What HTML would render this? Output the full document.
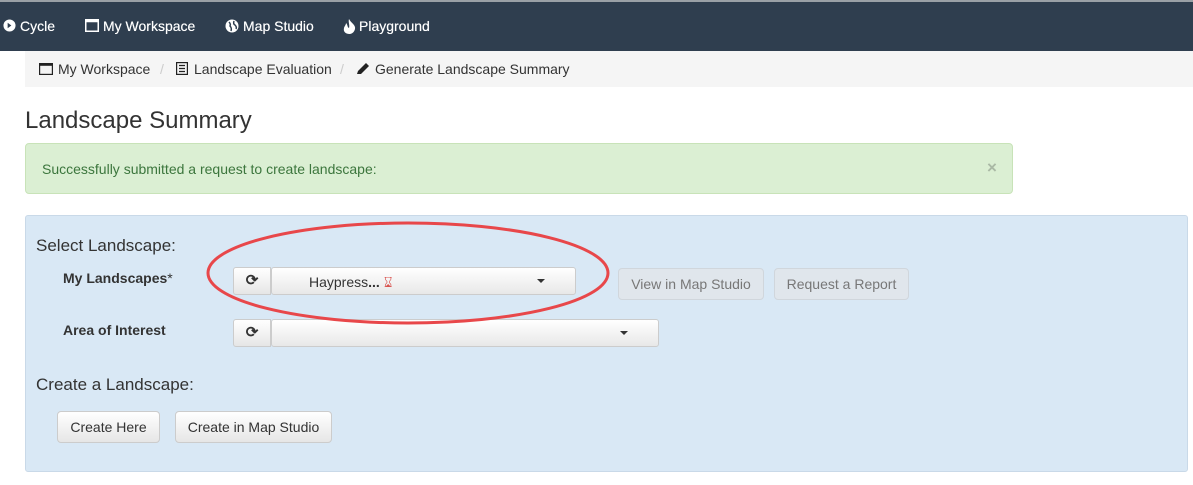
<!DOCTYPE html>
<html><head><style>
body{margin:0;width:1193px;height:485px;background:#fff;font-family:"Liberation Sans",sans-serif;position:relative;overflow:hidden;color:#333}
.top{position:absolute;left:0;top:0;width:1193px;height:51px;background:#2f3e4f;border-top:2px solid #9aa0a6;box-sizing:border-box}
.top span{position:absolute;top:16px;color:#fff;font-size:14px;text-shadow:0 0 0.4px #fff}
.top svg{position:absolute;top:17px}
.bc{position:absolute;left:25px;top:51px;width:1168px;height:36px;background:#f5f5f5;font-size:14px}
.bc span{position:absolute;top:10px}
.sep{color:#ccc}
h1{position:absolute;left:25px;top:107px;margin:0;font-size:24px;font-weight:normal}
.alert{position:absolute;left:25px;top:143px;width:988px;height:51px;background:#dbefd3;border:1px solid #c8e3b8;border-radius:4px;color:#3c763d;font-size:14px;box-sizing:border-box}
.panel{position:absolute;left:25px;top:215px;width:1163px;height:257px;background:#d9e8f5;border:1px solid #c9d9e8;border-radius:3px;box-sizing:border-box}
.lbl{position:absolute;font-size:17px;color:#333}
.b{position:absolute;font-size:14px;font-weight:bold;color:#333}
.sel{position:absolute;height:28px;border:1px solid #ccc;border-radius:3px;background:linear-gradient(#fff,#e8e8e8);box-sizing:border-box}
.rf{position:absolute;width:38px;height:28px;border:1px solid #ccc;border-radius:3px 0 0 3px;background:linear-gradient(#fff,#e6e6e6);box-sizing:border-box;text-align:center;font-size:15px;line-height:26px;color:#333;font-weight:bold}
.car{position:absolute;top:11px;width:0;height:0;border-left:4px solid transparent;border-right:4px solid transparent;border-top:4px solid #333}
.btn{position:absolute;height:32px;border:1px solid #ccc;border-radius:4px;font-size:14px;line-height:30px;text-align:center;box-sizing:border-box}
</style></head><body>
<div class="top">
<svg style="left:3px" width="13" height="13" viewBox="0 0 14 14"><circle cx="7" cy="7" r="6.5" fill="#fff"/><path d="M5 4 L9 7 L5 10Z" fill="#2f3e4f"/></svg>
<span style="left:20px">Cycle</span>
<svg style="left:85px" width="14" height="13" viewBox="0 0 14 13"><rect x="0.75" y="0.75" width="12.5" height="11.5" fill="none" stroke="#fff" stroke-width="1.5"/><rect x="0.75" y="0.75" width="12.5" height="2.5" fill="#fff"/></svg>
<span style="left:103px">My Workspace</span>
<svg style="left:225px" width="14" height="14" viewBox="0 0 14 14"><circle cx="7" cy="7" r="6.5" fill="#fff"/><path d="M4 3 Q6 5 5 7 Q7 9 6 12 M9 2 Q8 5 10 6 Q12 8 11 10" stroke="#2f3e4f" stroke-width="1.5" fill="none"/></svg>
<span style="left:243px">Map Studio</span>
<svg style="left:343px" width="13" height="15" viewBox="0 0 13 15"><path d="M6 0 C8 4 13 6 12 10 C11 14 8 15 6.5 15 C3 15 0 13 1 9 C1.5 7 3 6 3 4 C5 6 4 8 6 9 C7 6 5 3 6 0Z" fill="#fff"/></svg>
<span style="left:359px">Playground</span>
</div>
<div class="bc">
<svg style="position:absolute;left:14px;top:12px" width="14" height="12" viewBox="0 0 14 12"><rect x="0.6" y="0.6" width="12.8" height="10.8" fill="none" stroke="#222" stroke-width="1.2"/><rect x="0.6" y="0.6" width="12.8" height="2.2" fill="#222"/></svg>
<span style="left:33px;color:#333">My Workspace</span>
<span class="sep" style="left:135px">/</span>
<svg style="position:absolute;left:151px;top:11px" width="12" height="13" viewBox="0 0 12 13"><rect x="0.6" y="0.6" width="10.8" height="11.8" fill="none" stroke="#222" stroke-width="1.2"/><path d="M3 3.5H9M3 6.5H9M3 9.5H9" stroke="#222" stroke-width="1.2"/></svg>
<span style="left:169px">Landscape Evaluation</span>
<span class="sep" style="left:315px">/</span>
<svg style="position:absolute;left:331px;top:11px" width="14" height="13" viewBox="0 0 14 13"><path d="M1 12 L2 9 L10 1 L13 4 L5 12Z" fill="#222"/></svg>
<span style="left:350px">Generate Landscape Summary</span>
</div>
<h1>Landscape Summary</h1>
<div class="alert"><span style="position:absolute;left:16px;top:17px">Successfully submitted a request to create landscape:</span><span style="position:absolute;left:961px;top:14px;color:#aab9a5;font-size:17px;font-weight:bold">×</span></div>
<div class="panel"></div>
<div class="lbl" style="left:36px;top:236px">Select Landscape:</div>
<div class="b" style="left:63px;top:270px">My Landscapes<span style="font-weight:normal">*</span></div>
<div class="b" style="left:63px;top:322px">Area of Interest</div>
<div class="rf" style="left:233px;top:267px">&#10227;</div>
<div class="sel" style="left:271px;top:267px;width:305px"><span style="position:absolute;left:37px;top:6px;font-size:14px">Haypress<b>...</b> <span style="color:#d9534f">&#8987;&#xFE0E;</span></span><div class="car" style="left:265px"></div></div>
<div class="rf" style="left:233px;top:319px">&#10227;</div>
<div class="sel" style="left:271px;top:319px;width:388px"><div class="car" style="left:348px"></div></div>
<div class="btn" style="left:618px;top:268px;width:146px;background:#e0e6ec;color:#777;border-color:#d0d6dc">View in Map Studio</div>
<div class="btn" style="left:774px;top:268px;width:135px;background:#e0e6ec;color:#777;border-color:#d0d6dc">Request a Report</div>
<div class="lbl" style="left:36px;top:375px">Create a Landscape:</div>
<div class="btn" style="left:57px;top:411px;width:103px;background:linear-gradient(#fff,#e6e6e6)">Create Here</div>
<div class="btn" style="left:175px;top:411px;width:157px;background:linear-gradient(#fff,#e6e6e6)">Create in Map Studio</div>
<svg style="position:absolute;left:0;top:0" width="1193" height="485"><ellipse cx="408" cy="273" rx="200" ry="50" fill="none" stroke="#e8474a" stroke-width="3"/></svg>
</body></html>
